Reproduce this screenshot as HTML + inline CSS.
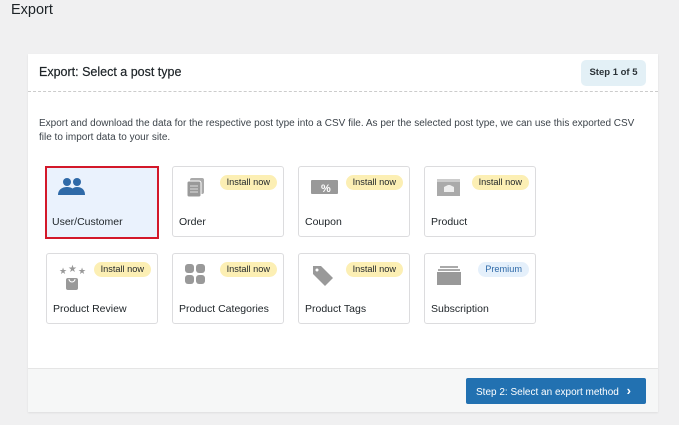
<!DOCTYPE html>
<html><head><style>
*{box-sizing:border-box;margin:0;padding:0}
body{width:679px;height:425px;background:#f0f0f1;font-family:"Liberation Sans",sans-serif;color:#1d2327;position:relative;overflow:hidden}
h1{position:absolute;left:11px;top:2px;font-size:14.5px;font-weight:normal}
.panel{position:absolute;left:28px;top:54px;width:630px;height:358px;background:#fff;box-shadow:0 1px 2px rgba(0,0,0,.08)}
.hd{height:38px;border-bottom:1px dashed #ccc;position:relative}
.hd .t{position:absolute;left:11px;top:11px;font-size:12.5px;-webkit-text-stroke:0.2px #1d2327}
.step{position:absolute;left:553px;top:6px;width:65px;height:26px;background:#e3f0f6;border-radius:5px;font-size:9.5px;font-weight:bold;text-align:center;line-height:26px;color:#2c3338}
.desc{position:absolute;left:11px;top:63px;width:606px;font-size:10px;line-height:14px;color:#3c434a}
.card{position:absolute;width:112px;height:71px;border:1px solid #dcdcde;border-radius:3px;background:#fff}
.card.sel{background:#eaf2fd;border:2px solid #d3182a;border-radius:0}
.card .l{position:absolute;left:6px;top:49px;font-size:10.5px;color:#1d2327}
.card.sel .l{left:5px;top:48px}
.bd{position:absolute;right:6px;top:8px;height:15px;line-height:15px;padding:0 7px;border-radius:8px;background:#fcefb4;font-size:9.2px;color:#1d2327}
.bd.p{background:#e5f0fb;color:#2f6aa8}
.ic{position:absolute;left:12px;top:10px}
.ft{position:absolute;left:0;top:314px;width:630px;height:44px;background:#f6f7f7;border-top:1px solid #e5e5e5}
.btn{position:absolute;left:438px;top:9px;width:180px;height:26px;background:#2271b1;border-radius:2px;color:#fff;font-size:10px;line-height:26px;padding-left:10px}
</style></head><body>
<h1>Export</h1>
<div class="panel">
<div class="hd"><div class="t">Export: Select a post type</div><div class="step">Step 1 of 5</div></div>
<div class="desc">Export and download the data for the respective post type into a CSV file. As per the selected post type, we can use this exported CSV file to import data to your site.</div>
</div>
<div class="card sel" style="left:45px;top:166px;width:114px;height:73px"><svg class="ic" style="left:10px;top:9px" width="30" height="22" viewBox="0 0 30 22"><circle cx="10" cy="5" r="4" fill="#2f6aa8"/><circle cx="20" cy="5" r="4" fill="#2f6aa8"/><path d="M1 18c0-6 5-8 9-8s9 2 9 8z" fill="#2f6aa8"/><path d="M13 18c0-5 3-8 7-8s8 2 8 8z" fill="#2f6aa8"/></svg><div class="l">User/Customer</div></div>
<div class="card" style="left:172px;top:166px"><svg class="ic" width="22" height="22" viewBox="0 0 22 22"><rect x="5" y="1" width="14" height="16" rx="2" fill="#aaa"/><rect x="2" y="4" width="14" height="16" rx="2" fill="#999" stroke="#fff"/><path d="M5 9h8M5 12h8M5 15h8" stroke="#ddd"/></svg><span class="bd">Install now</span><div class="l">Order</div></div>
<div class="card" style="left:298px;top:166px"><svg class="ic" width="28" height="20" viewBox="0 0 28 20"><rect x="0" y="3" width="27" height="14" rx="1" fill="#999"/><text x="10" y="15" font-size="11" font-weight="bold" fill="#fff" font-family="Liberation Sans">%</text></svg><span class="bd">Install now</span><div class="l">Coupon</div></div>
<div class="card" style="left:424px;top:166px"><svg class="ic" width="24" height="22" viewBox="0 0 24 22"><rect x="0" y="2" width="23" height="17" fill="#aaa"/><rect x="0" y="2" width="23" height="3" fill="#ccc"/><path d="M7 10l4-2h2l4 2v5h-10z" fill="#eee"/></svg><span class="bd">Install now</span><div class="l">Product</div></div>
<div class="card" style="left:46px;top:253px"><svg class="ic" width="30" height="28" viewBox="0 0 30 28"><text x="0" y="10" font-size="9" fill="#999">★</text><text x="9" y="8" font-size="10" fill="#999">★</text><text x="19" y="10" font-size="9" fill="#999">★</text><rect x="7" y="14" width="12" height="12" rx="2" fill="#999"/><path d="M10 15a3 3 0 0 0 6 0" stroke="#fff" fill="none"/></svg><span class="bd">Install now</span><div class="l">Product Review</div></div>
<div class="card" style="left:172px;top:253px"><svg class="ic" width="22" height="22" viewBox="0 0 22 22"><rect x="0" y="0" width="9" height="9" rx="3" fill="#999"/><rect x="11" y="0" width="9" height="9" rx="3" fill="#999"/><rect x="0" y="11" width="9" height="9" rx="3" fill="#999"/><rect x="11" y="11" width="9" height="9" rx="3" fill="#999"/></svg><span class="bd">Install now</span><div class="l">Product Categories</div></div>
<div class="card" style="left:298px;top:253px"><svg class="ic" width="24" height="26" viewBox="0 0 24 26"><path d="M2 2h8l12 12-8 8-12-12z" fill="#999"/><circle cx="6" cy="6" r="1.5" fill="#fff"/></svg><span class="bd">Install now</span><div class="l">Product Tags</div></div>
<div class="card" style="left:424px;top:253px"><svg class="ic" width="24" height="22" viewBox="0 0 24 22"><rect x="3" y="2" width="18" height="2" fill="#aaa"/><rect x="1" y="5" width="22" height="2" fill="#aaa"/><rect x="0" y="8" width="24" height="13" fill="#999"/></svg><span class="bd p">Premium</span><div class="l">Subscription</div></div>
<div class="panel" style="background:none;box-shadow:none;pointer-events:none"><div class="ft"><div class="btn">Step 2: Select an export method <span style="font-size:13px;margin-left:5px;font-weight:bold">&#x203A;</span></div></div></div>
</body></html>
